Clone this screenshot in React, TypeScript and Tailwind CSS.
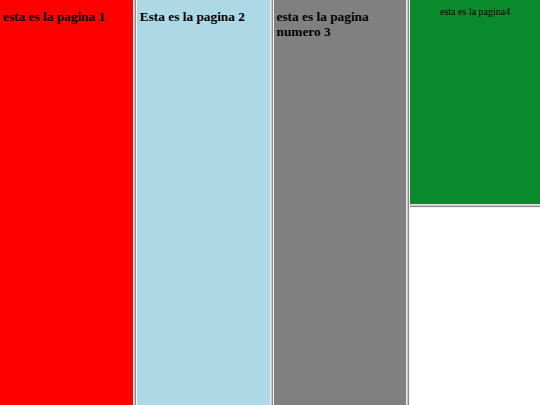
function Divider({ vertical = true }: { vertical?: boolean }) {
  return vertical ? (
    <div className="flex w-[4px] shrink-0">
      <div className="w-px bg-[#e6e6e6]" />
      <div className="w-px bg-[#c8c8c8]" />
      <div className="w-px bg-[#8c8c8c]" />
      <div className="w-px bg-[#f2f2f2]" />
    </div>
  ) : (
    <div className="flex h-[4px] shrink-0 flex-col">
      <div className="h-px bg-[#e6e6e6]" />
      <div className="h-px bg-[#c8c8c8]" />
      <div className="h-px bg-[#8c8c8c]" />
      <div className="h-px bg-[#f2f2f2]" />
    </div>
  );
}

function Page({ color, children }: { color: string; children: React.ReactNode }) {
  return (
    <div className={`${color} flex-1 pl-[3px] pt-[9px]`}>
      <b className="block text-[13.33px] leading-[15px] text-black">{children}</b>
    </div>
  );
}

export default function App() {
  return (
    <div className="flex h-[405px] w-[540px] font-['Liberation_Serif',serif]">
      <Page color="bg-[#ff0000]">esta es la pagina 1</Page>
      <Divider />
      <Page color="bg-[#add8e6]">Esta es la pagina 2</Page>
      <Divider />
      <Page color="bg-[#808080]">esta es la pagina numero 3</Page>
      <Divider />
      <div className="flex flex-1 flex-col">
        <div className="flex-1 bg-[#088a2d] pt-[6px] text-center text-[10px] leading-[12px] text-black">
          esta es la pagina4
        </div>
        <Divider vertical={false} />
        <div className="flex-1 bg-white" />
      </div>
    </div>
  );
}
